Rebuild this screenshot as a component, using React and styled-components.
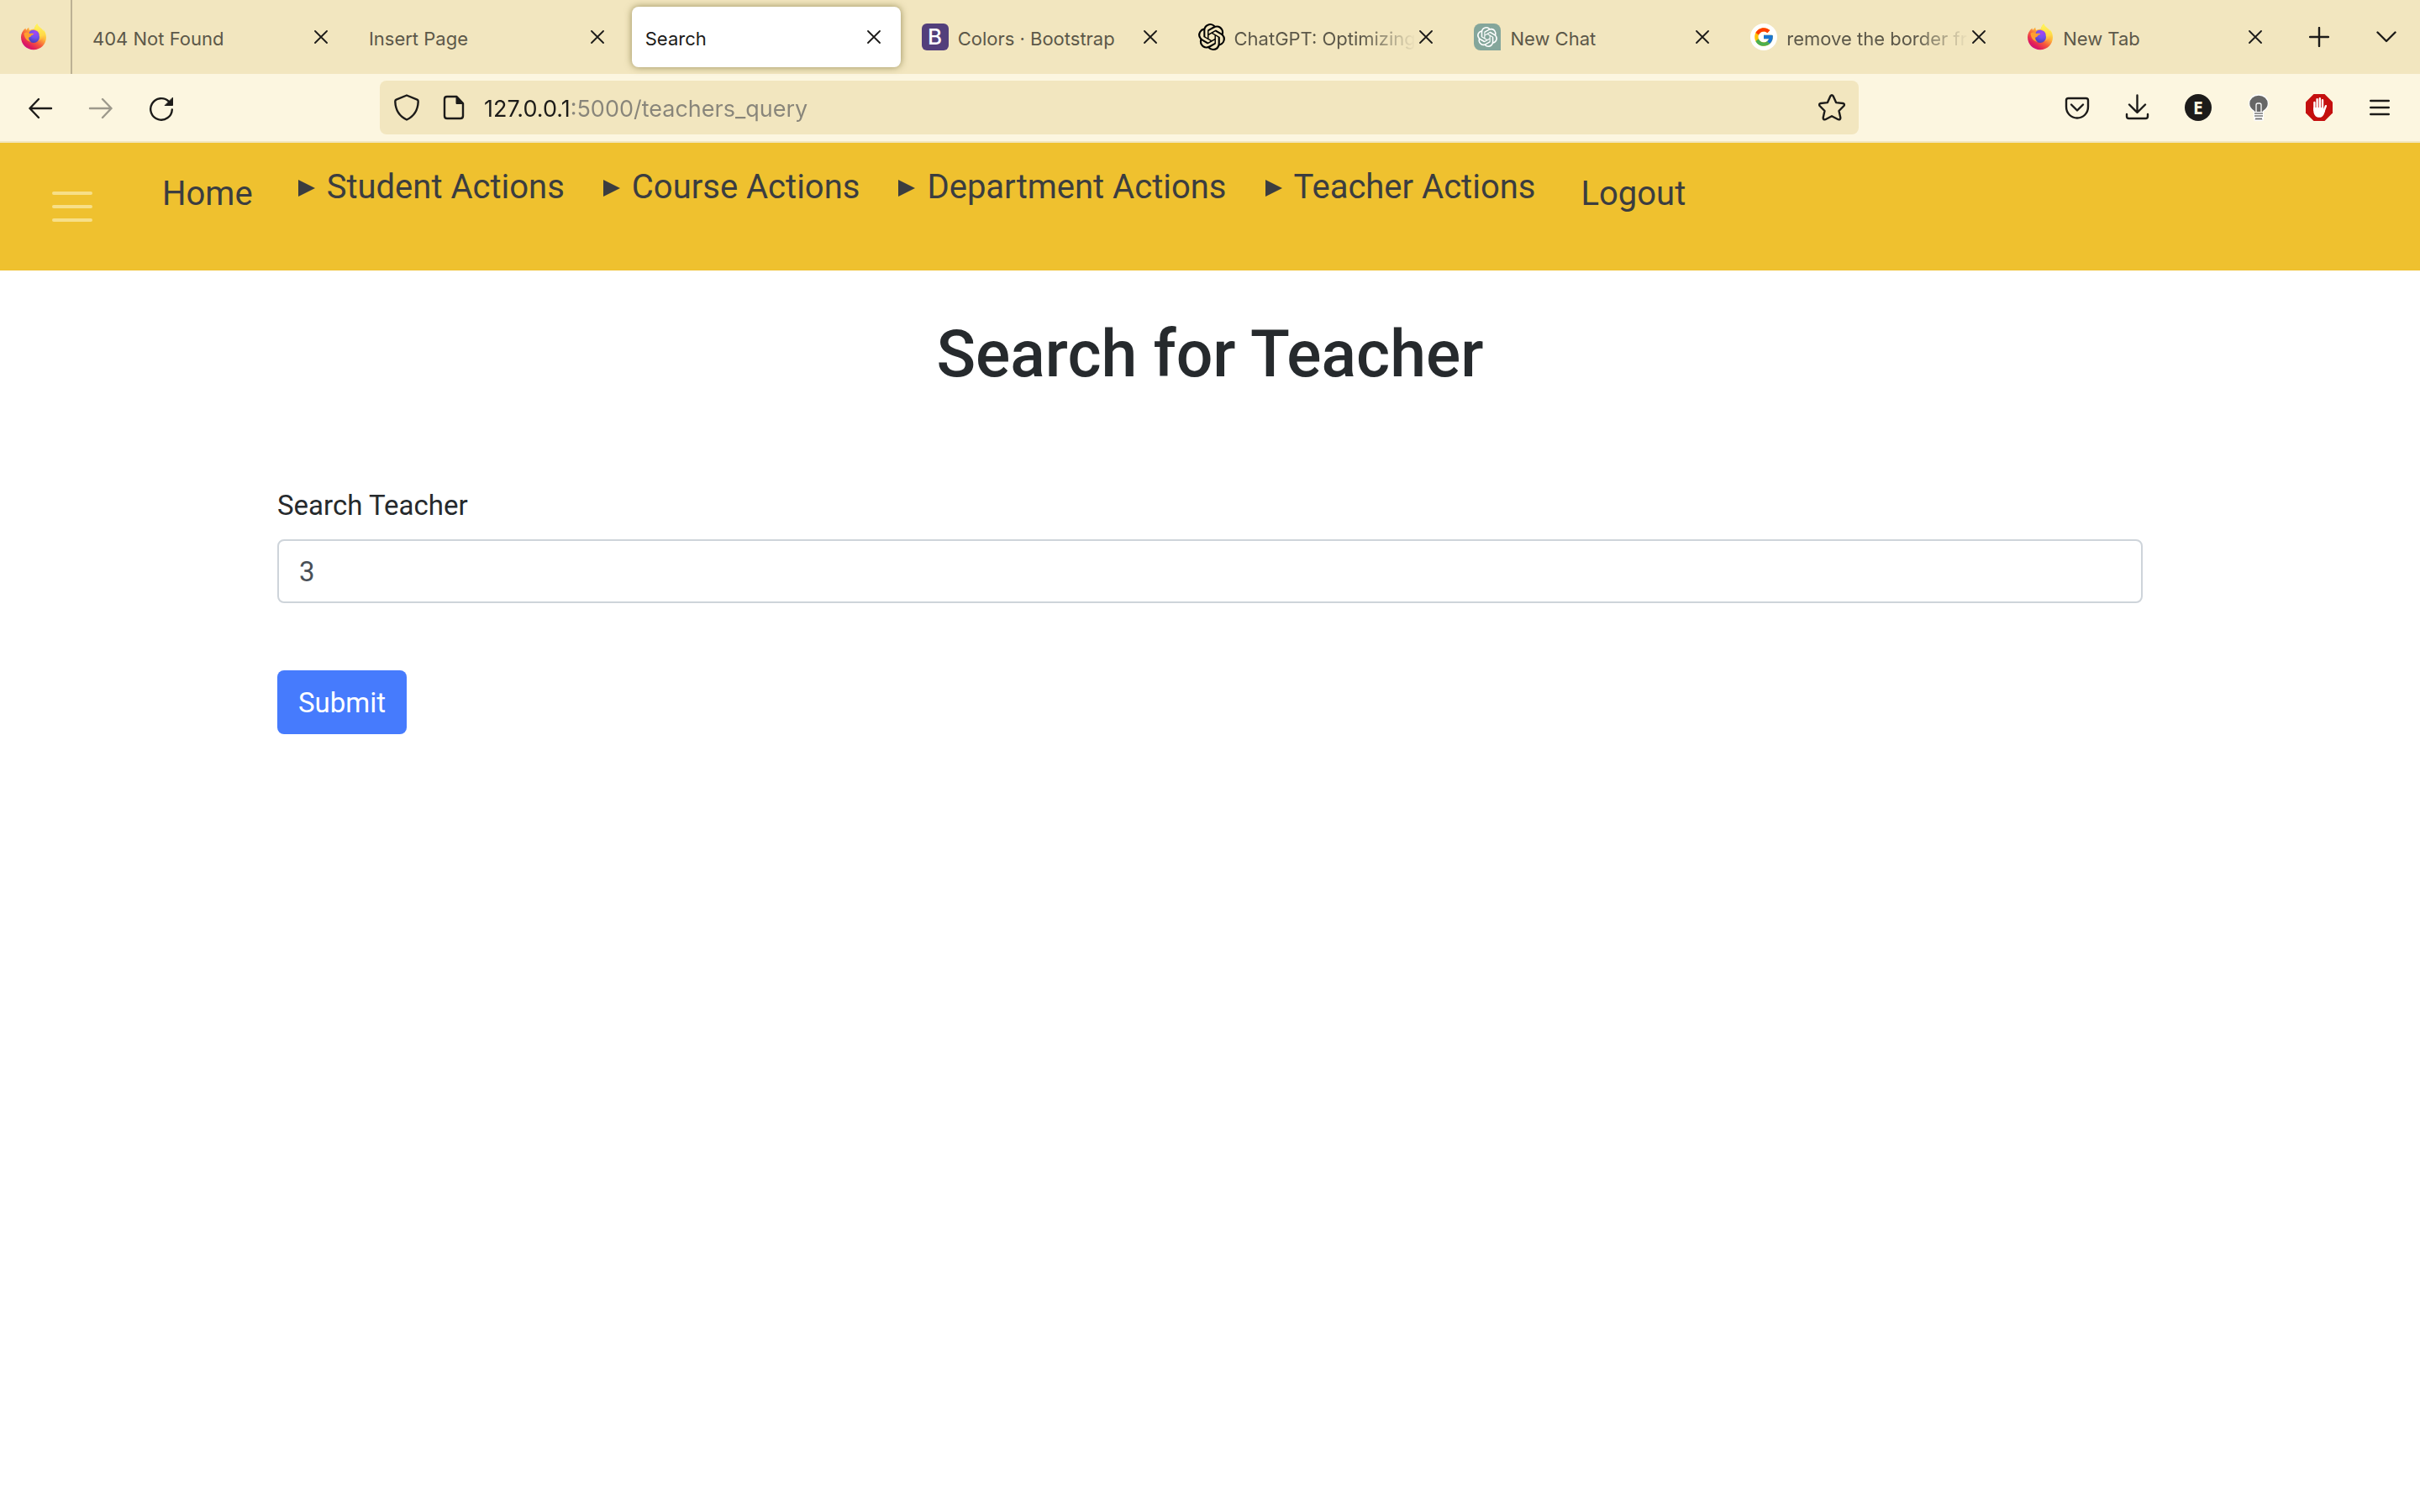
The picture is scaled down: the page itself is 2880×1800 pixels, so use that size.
import React from 'react';
import styled, { createGlobalStyle, css } from 'styled-components';
import { FcGoogle } from 'react-icons/fc';

const ink = '#1c1b19';
const tan = '#f2e6bf';
const cream = '#fcf6e0';
const chromeFont = 'Inter, "Liberation Sans", sans-serif';
const pageFont = 'Roboto, "Liberation Sans", sans-serif';

const GlobalStyle = createGlobalStyle`
  *, *::before, *::after { box-sizing: border-box; }
  body {
    margin: 0;
    background: #fff;
    color: #262a2d;
    font-family: ${pageFont};
  }
  button, input { font-family: inherit; margin: 0; }
  svg { display: block; flex: none; }
`;

/* ---------- browser chrome ---------- */

const Chrome = styled.header`
  font-family: ${chromeFont};
`;

const TabStrip = styled.div`
  display: flex;
  align-items: stretch;
  height: 88px;
  background: ${tan};
`;

const PinnedTab = styled.button`
  display: grid;
  place-items: center;
  width: 86px;
  padding: 0 4px 0 0;
  border: 0;
  border-right: 2px solid #bcb194;
  background: none;
`;

const Tabs = styled.div`
  flex: 1;
  min-width: 0;
  display: flex;
  gap: 9px;
  padding: 8px 5px 8px 8px;
`;

const Tab = styled.div`
  flex: 1 1 0;
  min-width: 0;
  display: flex;
  align-items: center;
  padding: 0 20px 0 16px;
  border-radius: 8px;
  color: #5c5849;
  ${(p) => p.$active && css`
    background: #fff;
    color: ${ink};
    box-shadow: 0 0 8px rgba(90, 80, 20, 0.6);
  `}
`;

const TabIcon = styled.span`
  flex: none;
  margin-right: 11px;
`;

const TabLabel = styled.span`
  flex: 1;
  min-width: 0;
  padding-top: 3px;
  overflow: hidden;
  white-space: nowrap;
  font-size: 22px;
  line-height: 32px;
  ${(p) => p.$fade && css`
    mask-image: linear-gradient(to left, transparent, #000 64px);
  `}
`;

const CloseButton = styled.button`
  flex: none;
  display: grid;
  place-items: center;
  width: 24px;
  height: 32px;
  padding: 0;
  border: 0;
  background: none;
  color: ${ink};
`;

const StripActions = styled.div`
  display: flex;
  align-items: center;
  gap: 32px;
  padding: 0 16px 0 15px;
`;

const IconButton = styled.button`
  display: grid;
  place-items: center;
  width: 48px;
  height: 48px;
  padding: 0;
  border: 0;
  background: none;
  color: ${ink};
  opacity: ${(p) => (p.disabled ? 0.42 : 1)};
`;

const BootstrapBadge = styled.span`
  display: grid;
  place-items: center;
  width: 32px;
  height: 32px;
  border-radius: 6px;
  background: #533f7b;
  color: #fff;
  font: 500 26px/32px ${chromeFont};
`;

const Toolbar = styled.div`
  display: flex;
  align-items: center;
  height: 82px;
  padding: 0 24px;
  border-bottom: 2px solid ${tan};
  background: ${cream};
`;

const ToolGroup = styled.div`
  display: flex;
  gap: 24px;
`;

const AddressBar = styled.div`
  flex: 1;
  min-width: 0;
  display: flex;
  align-items: center;
  gap: 8px;
  height: 64px;
  margin: 0 236px;
  padding: 0 8px;
  border-radius: 8px;
  background: ${tan};
`;

const AddressInput = styled.input`
  flex: 1;
  min-width: 0;
  height: 48px;
  margin-left: 4px;
  padding: 3px 0 0;
  border: 0;
  outline: 0;
  font-size: 27px;
  color: #88857a;
  background: linear-gradient(to right, ${ink} 101px, #88857a 101px);
  background-clip: text;
  -webkit-text-fill-color: transparent;
`;

const RoundBadge = styled.span`
  display: grid;
  place-items: center;
  width: 32px;
  height: 32px;
  border-radius: 50%;
  background: ${ink};
  color: ${cream};
  font: 700 21px/32px "Open Sans", sans-serif;
`;

/* ---------- page ---------- */

const Navbar = styled.nav`
  display: flex;
  align-items: flex-start;
  padding: 24px 32px;
  background: #efc12f;
`;

const Toggler = styled.button`
  display: grid;
  place-items: center;
  width: 108px;
  height: 104px;
  margin-right: 45px;
  padding: 0;
  border: 0;
  background: none;
  color: #f7df88;
`;

const NavList = styled.ul`
  display: flex;
  align-items: flex-start;
  gap: 46px;
  margin: 0;
  padding: 0;
  list-style: none;
  font-size: 40px;
  line-height: 58px;
  white-space: nowrap;
  color: #3b3d40;
`;

const NavLink = styled.a`
  display: block;
  padding: 8px 8px 0;
  color: inherit;
  text-decoration: none;
`;

const NavSummary = styled.summary`
  display: flex;
  align-items: center;
  gap: 14px;
  list-style: none;
  cursor: pointer;
`;

const Main = styled.main`
  max-width: 2220px;
  margin: 0 auto;
`;

const Title = styled.h1`
  margin: 0;
  padding-top: 52px;
  text-align: center;
  font-size: 77px;
  font-weight: 500;
  line-height: 96px;
`;

const Form = styled.form`
  display: flex;
  flex-direction: column;
  align-items: flex-start;
  padding-top: 108px;
  font-size: 33px;
  line-height: 48px;
`;

const Label = styled.label`
  margin-bottom: 16px;
`;

const TextInput = styled.input`
  width: 100%;
  height: 76px;
  padding: 0 24px;
  border: 2px solid #ced4da;
  border-radius: 8px;
  background: #fff;
  color: #495057;
  font-size: 33px;
`;

const SubmitButton = styled.button`
  height: 76px;
  margin-top: 80px;
  padding: 0 25px;
  border: 0;
  border-radius: 8px;
  background: #467bfd;
  color: #fff;
  font-size: 33px;
`;

/* ---------- drawings ---------- */

const Stroke = ({ w = 32, h = 32, sw = 2.4, children }) => (
  <svg width={w} height={h} viewBox={`0 0 ${w} ${h}`} fill="none" stroke="currentColor"
    strokeWidth={sw} strokeLinecap="round" strokeLinejoin="round" aria-hidden="true">
    {children}
  </svg>
);

const CloseIcon = () => <Stroke w={16} h={16} sw={1.8}><path d="M1 1l14 14M15 1L1 15" /></Stroke>;

const FirefoxIcon = ({ id }) => (
  <svg width="32" height="32" viewBox="0 0 32 32" aria-hidden="true">
    <defs>
      <linearGradient id={`${id}a`} x1="26" y1="4" x2="7" y2="30" gradientUnits="userSpaceOnUse">
        <stop offset="0.05" stopColor="#fff44f" />
        <stop offset="0.35" stopColor="#ffb13a" />
        <stop offset="0.6" stopColor="#f5573d" />
        <stop offset="0.85" stopColor="#e01b5d" />
        <stop offset="1" stopColor="#c4108a" />
      </linearGradient>
      <radialGradient id={`${id}b`} cx="18" cy="11" r="12" gradientUnits="userSpaceOnUse">
        <stop offset="0" stopColor="#a843f5" />
        <stop offset="0.5" stopColor="#7153ee" />
        <stop offset="1" stopColor="#4a3fb8" />
      </radialGradient>
      <linearGradient id={`${id}c`} x1="22" y1="0" x2="26" y2="24" gradientUnits="userSpaceOnUse">
        <stop offset="0" stopColor="#fff65a" />
        <stop offset="0.6" stopColor="#ffd84a" />
        <stop offset="1" stopColor="#ff8a35" stopOpacity="0.6" />
      </linearGradient>
    </defs>
    <path fill={`url(#${id}a)`} d="M20.2.2c-1.900 1.900-3 4-3.400 6.300-2.200.1-4 .6-5.500 1.500C10.500 7.300 10.300 6 10.400 4.800 9 5.500 7.900 6.700 7.200 8 6.700 7.300 6.500 6.300 6.500 5.400 2.900 8.300 1 12.200 1 16.200 1 24.600 7.600 31.200 16 31.200s15-6.600 15-15c0-4-1.700-7.500-3.600-9.300.2 1 .3 2 .3 2.700C26.200 5.500 21.500 4.500 20.200.2z" />
    <path fill={`url(#${id}c)`} d="M20.200.2c-1.900 1.900-3 4.300-3.200 6.800 3.300.5 6 3.200 6 7.200 0 3-1.400 5.500-3 7 4.600-.7 8.300-4 9.300-8.400-.4-2.200-1.200-3.300-1.900-3.700C26.200 5.500 21.500 4.500 20.200.2z" />
    <circle cx="16" cy="16" r="7" fill={`url(#${id}b)`} />
    <path fill={`url(#${id}b)`} d="M10.500 12c.2-3 3-4.600 6-4.200 3.400.4 5.800 2.600 6.200 5.800-1.400-1.200-3-1.200-4.500-.6z" />
    <path fill="#ff9f2f" d="M4.500 11.800c2.200-1.600 4.600-1.600 6.900.2 1.200-.5 3-.4 4.900.1-.3 1-1.600 1.700-3 2.200-.3 1.300-1.500 1.900-3 2.300-.4 2.200.7 4.200 2.600 5.400-4.600-.7-8-4.600-8.400-10.200z" />
  </svg>
);

const OpenAiIcon = ({ tile }) => (
  <svg width="32" height="32" viewBox={tile ? '-4 -4 32 32' : '0 0 24 24'} aria-hidden="true">
    {tile && <path fill="#84a69b" d="M28 28H4a8 8 0 0 1-8-8V4a8 8 0 0 1 8-8h16a8 8 0 0 1 8 8z" />}
    <path fill={tile ? '#fff' : '#000'} d="M22.2819 9.8211a5.9847 5.9847 0 0 0-.5157-4.9108 6.0462 6.0462 0 0 0-6.5098-2.9A6.0651 6.0651 0 0 0 4.9807 4.1818a5.9847 5.9847 0 0 0-3.9977 2.9 6.0462 6.0462 0 0 0 .7427 7.0966 5.98 5.98 0 0 0 .511 4.9107 6.051 6.051 0 0 0 6.5146 2.9001A5.9847 5.9847 0 0 0 13.2599 24a6.0557 6.0557 0 0 0 5.7718-4.2058 5.9894 5.9894 0 0 0 3.9977-2.9001 6.0557 6.0557 0 0 0-.7475-7.0729zm-9.022 12.6081a4.4755 4.4755 0 0 1-2.8764-1.0408l.1419-.0804 4.7783-2.7582a.7948.7948 0 0 0 .3927-.6813v-6.7369l2.02 1.1686a.071.071 0 0 1 .038.052v5.5826a4.504 4.504 0 0 1-4.4945 4.4944zm-9.6607-4.1254a4.4708 4.4708 0 0 1-.5346-3.0137l.142.0852 4.783 2.7582a.7712.7712 0 0 0 .7806 0l5.8428-3.3685v2.3324a.0804.0804 0 0 1-.0332.0615L9.74 19.9502a4.4992 4.4992 0 0 1-6.1408-1.6464zM2.3408 7.8956a4.485 4.485 0 0 1 2.3655-1.9728V11.6a.7664.7664 0 0 0 .3879.6765l5.8144 3.3543-2.0201 1.1685a.0757.0757 0 0 1-.071 0l-4.8303-2.7865A4.504 4.504 0 0 1 2.3408 7.872zm16.5963 3.8558L13.1038 8.364 15.1192 7.2a.0757.0757 0 0 1 .071 0l4.8303 2.7913a4.4944 4.4944 0 0 1-.6765 8.1042v-5.6772a.79.79 0 0 0-.407-.667zm2.0107-3.0231l-.142-.0852-4.7735-2.7818a.7759.7759 0 0 0-.7854 0L9.409 9.2297V6.8974a.0662.0662 0 0 1 .0284-.0615l4.8303-2.7866a4.4992 4.4992 0 0 1 6.6802 4.66zM8.3065 12.863l-2.02-1.1638a.0804.0804 0 0 1-.038-.0567V6.0742a4.4992 4.4992 0 0 1 7.3757-3.4537l-.142.0805L8.704 5.459a.7948.7948 0 0 0-.3927.6813zm1.0976-2.3654l2.602-1.4998 2.6069 1.4998v2.9994l-2.5974 1.4997-2.6067-1.4997Z" />
  </svg>
);

const GoogleIcon = () => (
  <svg width="32" height="32" viewBox="0 0 32 32" aria-hidden="true">
    <circle cx="16" cy="16" r="16" fill="#fff" />
    <FcGoogle x="3" y="3" size={26} />
  </svg>
);

const BulbIcon = () => (
  <svg width="32" height="32" viewBox="0 0 32 32" aria-hidden="true">
    <path fill="#666" stroke="#fff" strokeWidth="1.300" d="M16 1C9.500 1 4.600 5.500 4.600 11.200c0 4.600 2.900 7.400 6 9.300V30q0 1.300 1.300 1.300h8.200q1.300 0 1.300-1.300v-9.500c3.100-1.900 6-4.700 6-9.300C27.400 5.500 22.500 1 16 1z" />
    <path fill="#fff" d="M10.600 21h10.800v9.500H10.600z" />
    <path fill="none" stroke="#fff" strokeWidth="1.300" d="M13 21.500V13q0-2 2-2h2q2 0 2 2v8.500" />
    <path stroke="#777" strokeWidth="1.500" d="M11 23h10M11 26h10M12 29.300h8" />
  </svg>
);

const AdblockIcon = () => (
  <svg width="32" height="32" viewBox="0 0 32 32" aria-hidden="true">
    <path fill="#c40f0f" d="M9.500 0h13L32 9.500v13L22.500 32h-13L0 22.500v-13z" />
    <path fill="none" stroke="#fff" strokeWidth="2.400" strokeLinecap="round" d="M10.400 10v9M13.600 6.200V18M16.800 5.300V18M20 7.200V18M23.900 14.200l-2.400 6.500" />
    <path fill="#fff" d="M9.200 16h12v3.500l1.800.5c-1.200 4.500-2.600 7.800-6.600 7.800-4.900 0-7.200-3.600-7.200-8.800z" />
  </svg>
);

const TriangleIcon = () => (
  <svg width="20" height="22" viewBox="0 0 20 22" aria-hidden="true">
    <path fill="currentColor" d="M0 2l20 10L0 22z" />
  </svg>
);

const TABS = [
  { label: '404 Not Found' },
  { label: 'Insert Page' },
  { label: 'Search', active: true },
  { label: 'Colors · Bootstrap', icon: <BootstrapBadge>B</BootstrapBadge> },
  { label: 'ChatGPT: Optimizing', icon: <OpenAiIcon />, fade: true },
  { label: 'New Chat', icon: <OpenAiIcon tile /> },
  { label: 'remove the border fr', icon: <GoogleIcon />, fade: true },
  { label: 'New Tab', icon: <FirefoxIcon id="tab" /> },
];

const MENUS = ['Student Actions', 'Course Actions', 'Department Actions', 'Teacher Actions'];

export default function App() {
  return (
    <>
      <GlobalStyle />
      <Chrome>
        <TabStrip>
          <PinnedTab aria-label="Firefox View"><FirefoxIcon id="pin" /></PinnedTab>
          <Tabs>
            {TABS.map((t) => (
              <Tab key={t.label} $active={t.active}>
                {t.icon && <TabIcon>{t.icon}</TabIcon>}
                <TabLabel $fade={t.fade}>{t.label}</TabLabel>
                <CloseButton aria-label={`Close ${t.label}`}><CloseIcon /></CloseButton>
              </Tab>
            ))}
          </Tabs>
          <StripActions>
            <IconButton aria-label="Open a new tab">
              <Stroke w={24} h={24}><path d="M12 1v22M1 12h22" /></Stroke>
            </IconButton>
            <IconButton aria-label="List all tabs">
              <Stroke w={24} h={14}><path d="M1.500 1.500L12 12 22.500 1.500" /></Stroke>
            </IconButton>
          </StripActions>
        </TabStrip>

        <Toolbar>
          <ToolGroup>
            <IconButton aria-label="Back">
              <Stroke><path d="M3.500 17h25.500M14 6L3.500 17 14 28" /></Stroke>
            </IconButton>
            <IconButton aria-label="Forward" disabled>
              <Stroke><path d="M28.500 17H3M18 6l10.500 11L18 28" /></Stroke>
            </IconButton>
            <IconButton aria-label="Reload">
              <Stroke>
                <path d="M28.800 18.500A12.800 12.800 0 1 1 25 8.800" />
                <path fill="currentColor" strokeWidth="1" d="M29.500 4.500V13.500H20.500z" />
              </Stroke>
            </IconButton>
          </ToolGroup>
          <AddressBar>
            <IconButton aria-label="Tracking protection">
              <Stroke><path d="M16 1.500l12.500 5.200Q29.800 7.300 29.700 9C29.300 19 24.500 26.500 16 30.500 7.500 26.500 2.700 19 2.300 9Q2.200 7.300 3.500 6.700z" /></Stroke>
            </IconButton>
            <IconButton aria-label="Site information">
              <Stroke>
                <path d="M8 3h11.500l7.500 8v15q0 3-3 3H8q-3 0-3-3V6q0-3 3-3z" />
                <path fill="currentColor" strokeWidth="1" d="M19 3v8.500h8z" />
              </Stroke>
            </IconButton>
            <AddressInput aria-label="Address" defaultValue="127.0.0.1:5000/teachers_query" />
            <IconButton aria-label="Bookmark this page">
              <Stroke>
                <path d="M14.300 2.500q1.700-2.500 3.400 0l3.400 7.600 8.100.9q2.800.8 1.200 3L24.500 20l1.800 8q.1 3-2.700 2.200L16 26.300l-7.600 3.900q-2.800.8-2.700-2.200l1.800-8L1.600 14q-1.600-2.200 1.200-3l8.100-.9z" />
              </Stroke>
            </IconButton>
          </AddressBar>
          <ToolGroup>
            <IconButton aria-label="Save to Pocket">
              <Stroke>
                <path d="M5.500 5h21q2.500 0 2.500 2.500V15c0 8-6 13.500-13 13.500S3 23 3 15V7.500Q3 5 5.500 5z" />
                <path d="M9 12.500l7 7 7-7" />
              </Stroke>
            </IconButton>
            <IconButton aria-label="Downloads">
              <Stroke>
                <path d="M15.500 1.500V21M6 12.500l9.500 9.500 9.500-9.500" />
                <path d="M3 24v2.500Q3 29 5.500 29h20q2.500 0 2.500-2.500V24" />
              </Stroke>
            </IconButton>
            <IconButton aria-label="Extension"><RoundBadge>E</RoundBadge></IconButton>
            <IconButton aria-label="Turn off the lights"><BulbIcon /></IconButton>
            <IconButton aria-label="Adblock"><AdblockIcon /></IconButton>
            <IconButton aria-label="Open application menu">
              <Stroke w={24} h={20}><path d="M1.200 2h21.600M1.200 10h21.600M1.200 18h21.600" /></Stroke>
            </IconButton>
          </ToolGroup>
        </Toolbar>
      </Chrome>

      <Navbar>
        <Toggler aria-label="Toggle navigation">
          <Stroke w={48} h={36} sw={4}><path d="M2 2h44M2 18h44M2 34h44" /></Stroke>
        </Toggler>
        <NavList>
          <li><NavLink href="#home">Home</NavLink></li>
          {MENUS.map((m) => (
            <li key={m}>
              <details>
                <NavSummary><TriangleIcon />{m}</NavSummary>
              </details>
            </li>
          ))}
          <li><NavLink href="#logout">Logout</NavLink></li>
        </NavList>
      </Navbar>

      <Main>
        <Title>Search for Teacher</Title>
        <Form onSubmit={(e) => e.preventDefault()}>
          <Label htmlFor="teacher">Search Teacher</Label>
          <TextInput id="teacher" name="teacher" defaultValue="3" />
          <SubmitButton type="submit">Submit</SubmitButton>
        </Form>
      </Main>
    </>
  );
}
